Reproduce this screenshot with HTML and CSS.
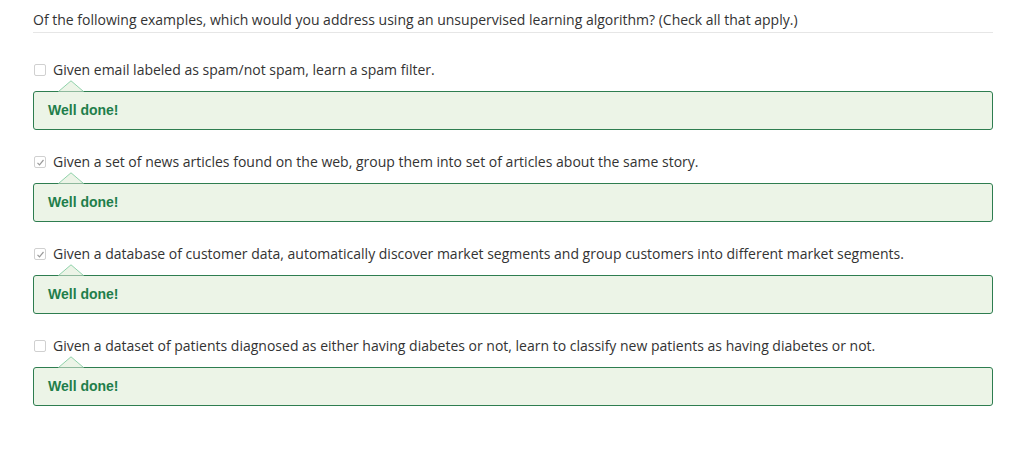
FILE: index.html
```html
<!DOCTYPE html>
<html>
<head>
<meta charset="utf-8">
<link rel="stylesheet" href="styles.css">
</head>
<body>
<div class="quiz">
  <div class="question">Of the following examples, which would you address using an unsupervised learning algorithm? (Check all that apply.)</div>
  <div class="options">
    <div class="option">
      <div class="label"><span class="box"></span><span>Given email labeled as spam/not spam, learn a spam filter.</span></div>
      <div class="feedback"><svg class="arrow" width="26" height="12" viewBox="0 0 26 12"><polyline points="0.5,11.5 13,0.8 25.5,11.5" fill="#ecf4e7" stroke="#8fd1aa" stroke-width="1"/></svg>Well done!</div>
    </div>
    <div class="option">
      <div class="label"><span class="box checked"><svg width="9" height="9" viewBox="0 0 9 9"><polyline points="1.5,4.8 3.5,6.8 7.5,2" fill="none" stroke="#9a9a9a" stroke-width="1.2"/></svg></span><span>Given a set of news articles found on the web, group them into set of articles about the same story.</span></div>
      <div class="feedback"><svg class="arrow" width="26" height="12" viewBox="0 0 26 12"><polyline points="0.5,11.5 13,0.8 25.5,11.5" fill="#ecf4e7" stroke="#8fd1aa" stroke-width="1"/></svg>Well done!</div>
    </div>
    <div class="option">
      <div class="label"><span class="box checked"><svg width="9" height="9" viewBox="0 0 9 9"><polyline points="1.5,4.8 3.5,6.8 7.5,2" fill="none" stroke="#9a9a9a" stroke-width="1.2"/></svg></span><span>Given a database of customer data, automatically discover market segments and group customers into different market segments.</span></div>
      <div class="feedback"><svg class="arrow" width="26" height="12" viewBox="0 0 26 12"><polyline points="0.5,11.5 13,0.8 25.5,11.5" fill="#ecf4e7" stroke="#8fd1aa" stroke-width="1"/></svg>Well done!</div>
    </div>
    <div class="option">
      <div class="label"><span class="box"></span><span>Given a dataset of patients diagnosed as either having diabetes or not, learn to classify new patients as having diabetes or not.</span></div>
      <div class="feedback"><svg class="arrow" width="26" height="12" viewBox="0 0 26 12"><polyline points="0.5,11.5 13,0.8 25.5,11.5" fill="#ecf4e7" stroke="#8fd1aa" stroke-width="1"/></svg>Well done!</div>
    </div>
  </div>
</div>
</body>
</html>
```

FILE: styles.css
```css
html, body {
  margin: 0;
  padding: 0;
  background: #ffffff;
}
.quiz {
  width: 960px;
  margin-left: 33px;
  font-family: "Open Sans", "Liberation Sans", sans-serif;
  font-size: 14px;
  color: #333333;
}
.question {
  padding-top: 11px;
  line-height: 18px;
  padding-bottom: 3px;
  border-bottom: 1px solid #e6e6e6;
}
.options {
  display: flex;
  flex-direction: column;
  gap: 22px;
  padding-top: 27px;
}
.option {
  display: flex;
  flex-direction: column;
}
.label {
  display: flex;
  align-items: center;
  height: 20px;
  line-height: 20px;
}
.box {
  width: 10px;
  height: 10px;
  border: 1px solid #d0d0d0;
  border-radius: 2px;
  margin-left: 1px;
  margin-right: 7px;
  display: flex;
  align-items: center;
  justify-content: center;
  flex: none;
}
.box svg {
  display: block;
}
.feedback {
  position: relative;
  margin-top: 11px;
  height: 37px;
  line-height: 37px;
  padding-left: 14px;
  background: #ecf4e7;
  border: 1px solid #2e7d50;
  border-radius: 3px;
  font-family: "Liberation Sans", Arial, sans-serif;
  font-weight: bold;
  font-size: 14px;
  color: #1f7e4b;
}
.arrow {
  position: absolute;
  left: 24px;
  top: -12px;
  display: block;
}
```
